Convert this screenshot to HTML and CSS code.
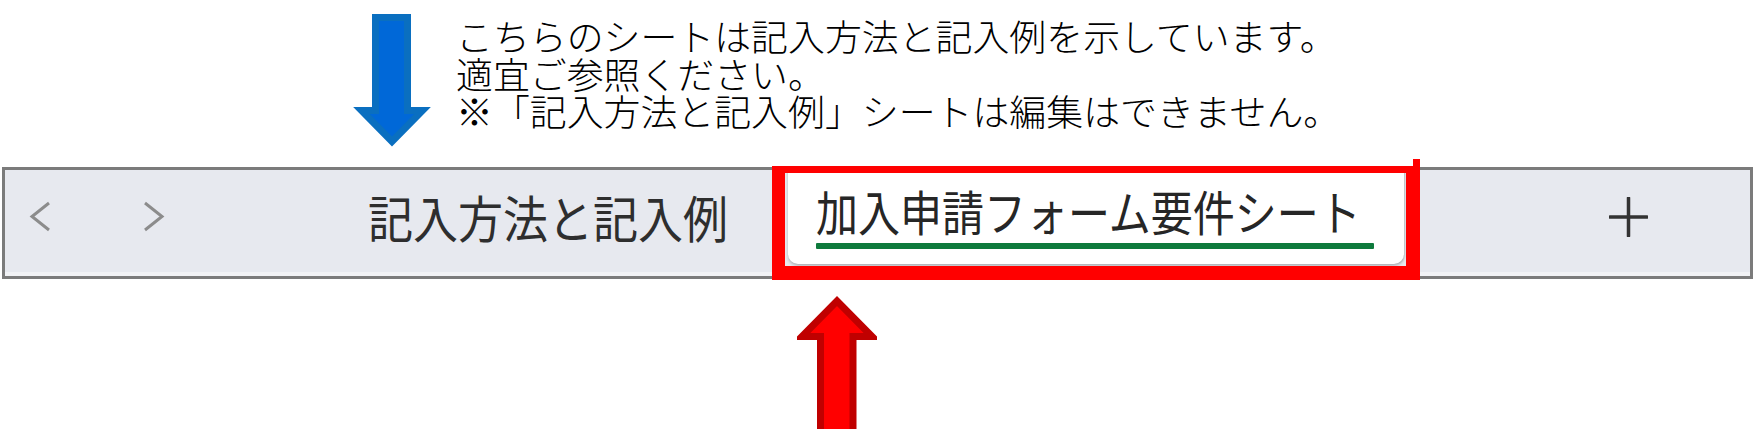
FILE: index.html
```html
<!DOCTYPE html>
<html lang="ja">
<head>
<meta charset="utf-8">
<title>シートタブの説明</title>
<link rel="stylesheet" href="styles.css">
</head>
<body>
<div class="page">
  <div class="note">
    <svg class="arrow-down" width="78" height="133" viewBox="0 0 78 133" aria-hidden="true">
      <polygon points="22.5,3.5 54.5,3.5 54.5,96.5 69.5,96.5 39,127.5 8.5,96.5 22.5,96.5" fill="#0068d8" stroke="#0a6fc0" stroke-width="7" stroke-linejoin="miter"/>
    </svg>
    <div class="note-text">
      <p>こちらのシートは記入方法と記入例を示しています。</p>
      <p>適宜ご参照ください。</p>
      <p>※「記入方法と記入例」シートは編集はできません。</p>
    </div>
  </div>

  <div class="tabbar">
    <div class="nav">
      <svg class="chev" width="23" height="31" viewBox="0 0 23 31" aria-hidden="true">
        <polyline points="20,2 3,15.5 20,29" fill="none" stroke="#8c8c8c" stroke-width="3"/>
      </svg>
      <svg class="chev" width="23" height="31" viewBox="0 0 23 31" aria-hidden="true">
        <polyline points="3,2 20,15.5 3,29" fill="none" stroke="#8c8c8c" stroke-width="3"/>
      </svg>
    </div>
    <div class="tab">
      <span class="tab-label">記入方法と記入例</span>
    </div>
    <div class="tab tab-active">
      <span class="tab-label-wrap">
        <span class="tab-label">加入申請フォーム要件シート</span>
      </span>
      <span class="tab-underline"></span>
    </div>
    <div class="add">
      <svg width="39" height="40" viewBox="0 0 39 40" aria-hidden="true">
        <line x1="19.5" y1="1" x2="19.5" y2="39" stroke="#333" stroke-width="3.5" stroke-linecap="round"/>
        <line x1="1" y1="20" x2="38" y2="20" stroke="#333" stroke-width="3.5" stroke-linecap="round"/>
      </svg>
    </div>
    <div class="highlight"></div>
    <div class="highlight-notch"></div>
  </div>

  <div class="pointer">
    <svg class="arrow-up" width="80" height="136" viewBox="0 0 80 136" aria-hidden="true">
      <polygon points="40,5 75,40.5 56,40.5 56,140 23.5,140 23.5,40.5 5,40.5" fill="#ff0000" stroke="#c00000" stroke-width="7"/>
    </svg>
  </div>
</div>
</body>
</html>
```

FILE: styles.css
```css
* {
  box-sizing: border-box;
}

html, body {
  margin: 0;
  padding: 0;
  background: #ffffff;
}

body {
  width: 1754px;
  height: 429px;
  overflow: hidden;
  font-family: "Noto Sans CJK JP", "Noto Sans", sans-serif;
}

.page {
  display: flex;
  flex-direction: column;
}

/* annotation at the top */
.note {
  display: flex;
  align-items: flex-start;
  padding-left: 353px;
  height: 167px;
}

.arrow-down {
  display: block;
  margin-top: 14px;
  flex: none;
}

.note-text {
  margin-left: 25px;
  margin-top: 17px;
  font-size: 36.9px;
  line-height: 37.5px;
  font-weight: 300;
  color: #000000;
  white-space: nowrap;
}

.note-text p {
  margin: 0;
  height: 37.5px;
}

/* sheet tab bar */
.tabbar {
  position: relative;
  display: flex;
  align-items: flex-start;
  margin-left: 2px;
  width: 1751px;
  height: 112px;
  border: 3px solid #7b7b7b;
  background: #e7e9ef;
  box-shadow: inset 0 -4px 0 #f1f2f5;
}

.nav {
  display: flex;
  gap: 90px;
  padding-left: 24px;
  padding-top: 31px;
  flex: none;
}

.chev {
  display: block;
}

.tab {
  flex: none;
  display: flex;
  flex-direction: column;
  align-items: flex-start;
}

.tab-label {
  display: inline-block;
  font-size: 50px;
  line-height: 60px;
  color: #2e2e2e;
  white-space: nowrap;
  transform: scaleX(0.9);
  transform-origin: left center;
}

.tab:not(.tab-active) {
  margin-left: 203px;
  padding-top: 16px;
  width: 420px;
}

.tab-active {
  width: 616px;
  height: 94px;
  background: #ffffff;
  border-radius: 0 0 10px 10px;
  box-shadow: 0 2px 3px rgba(0, 0, 0, 0.22), 1px 0 2px rgba(0, 0, 0, 0.12);
  padding: 10px 30px 0 28px;
}

.tab-label-wrap {
  display: block;
  width: 558px;
  height: 60px;
  padding-left: 0;
}

.tab-active .tab-label {
  font-size: 48px;
  transform: scaleX(0.875);
  color: #262626;
}

.tab-underline {
  display: block;
  width: 558px;
  height: 6px;
  margin-top: 3px;
  background: #0e7a3c;
  border-radius: 1px;
}

.add {
  flex: none;
  margin-left: 205px;
  padding-top: 27px;
}

.add svg {
  display: block;
}

/* red highlight around the active tab */
.highlight {
  position: absolute;
  left: 767px;
  top: -4px;
  width: 648px;
  height: 114px;
  border-style: solid;
  border-color: #ff0000;
  border-width: 7px 14px 14px 13px;
  pointer-events: none;
}

.highlight-notch {
  position: absolute;
  left: 1408px;
  top: -11px;
  width: 7px;
  height: 8px;
  background: #ff0000;
}

/* red pointer below */
.pointer {
  padding-left: 797px;
  padding-top: 17px;
}

.arrow-up {
  display: block;
}
```
